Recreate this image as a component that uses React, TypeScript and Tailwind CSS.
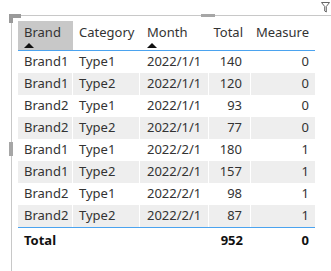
import React from 'react';

type Row = { brand: string; category: string; month: string; total: number; measure: number };

const ROWS: Row[] = [
  { brand: 'Brand1', category: 'Type1', month: '2022/1/1', total: 140, measure: 0 },
  { brand: 'Brand1', category: 'Type2', month: '2022/1/1', total: 120, measure: 0 },
  { brand: 'Brand2', category: 'Type1', month: '2022/1/1', total: 93, measure: 0 },
  { brand: 'Brand2', category: 'Type2', month: '2022/1/1', total: 77, measure: 0 },
  { brand: 'Brand1', category: 'Type1', month: '2022/2/1', total: 180, measure: 1 },
  { brand: 'Brand1', category: 'Type2', month: '2022/2/1', total: 157, measure: 1 },
  { brand: 'Brand2', category: 'Type1', month: '2022/2/1', total: 98, measure: 1 },
  { brand: 'Brand2', category: 'Type2', month: '2022/2/1', total: 87, measure: 1 },
];

const GRID = 'grid grid-cols-[55px_67px_69px_42px_64px]';

const SortArrow = () => (
  <svg width="10" height="5" viewBox="0 0 10 5" className="mt-[2px]">
    <path d="M0 5 L5 0 L10 5 Z" fill="#111" />
  </svg>
);

const FilterIcon = () => (
  <svg width="9" height="11" viewBox="0 0 9 11" fill="none">
    <path d="M0.5 0.5 H8.5 L5.3 4.5 V10 L3.7 9 V4.5 Z" stroke="#666" strokeWidth="1" strokeLinejoin="round" />
  </svg>
);

export default function App() {
  return (
    <div
      className="relative w-[331px] h-[271px] bg-white overflow-hidden text-[13px] text-[#333]"
      style={{ fontFamily: '"Noto Sans", "Open Sans", sans-serif' }}
    >
      {/* filter icon */}
      <div className="absolute left-[321px] top-[2px]">
        <FilterIcon />
      </div>

      {/* visual frame */}
      <div className="ml-[11px] mt-[15px] h-[256px] border-t border-l border-[#c8c8c8] pl-[6px] pt-[5px]">
        {/* Header */}
        <div className={`${GRID} h-[30px] border-b border-[#4ba3ef] w-[297px]`}>
          <div className="bg-[#c8c8c8] pl-[6px] pt-[3px] leading-[17px]">
            <div>Brand</div>
            <SortArrow />
          </div>
          <div className="pl-[6px] pt-[3px] leading-[17px]">Category</div>
          <div className="pl-[7px] pt-[3px] leading-[17px]">
            <div>Month</div>
            <SortArrow />
          </div>
          <div className="pr-[8px] pt-[3px] leading-[17px] text-right">Total</div>
          <div className="pr-[6px] pt-[3px] leading-[17px] text-right">Measure</div>
        </div>

        {/* Rows */}
        {ROWS.map((r, i) => (
          <div
            key={i}
            className={`${GRID} h-[22px] w-[297px] items-stretch ${i % 2 === 1 ? 'bg-[#eeeeee]' : 'bg-white'}`}
          >
            <div className="pl-[6px] flex items-center border-r border-white">{r.brand}</div>
            <div className="pl-[6px] flex items-center border-r border-white">{r.category}</div>
            <div className="pl-[7px] flex items-center border-r border-white">{r.month}</div>
            <div className="pr-[8px] flex items-center justify-end border-r border-white">{r.total}</div>
            <div className="pr-[6px] flex items-center justify-end">{r.measure}</div>
          </div>
        ))}

        {/* Total */}
        <div className={`${GRID} h-[26px] w-[297px] border-t border-[#4ba3ef] font-bold text-[#111]`}>
          <div className="pl-[6px] flex items-center">Total</div>
          <div />
          <div />
          <div className="pr-[8px] flex items-center justify-end">952</div>
          <div className="pr-[6px] flex items-center justify-end">0</div>
        </div>
      </div>

      {/* selection handles */}
      <div className="absolute left-[9px] top-[14px] w-[12px] h-[4px] bg-[#9a9a9a]" />
      <div className="absolute left-[9px] top-[14px] w-[4px] h-[9px] bg-[#9a9a9a]" />
      <div className="absolute left-[201px] top-[14px] w-[14px] h-[3px] bg-[#a6a6a6]" />
      <div className="absolute left-[9px] top-[142px] w-[4px] h-[14px] bg-[#a6a6a6]" />
    </div>
  );
}
